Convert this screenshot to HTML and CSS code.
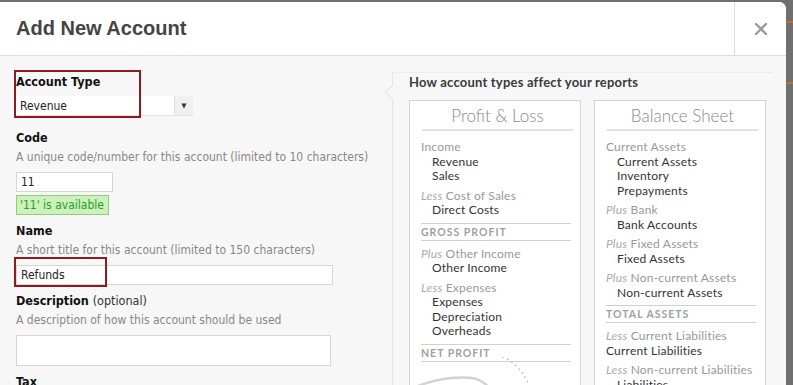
FILE: index.html
```html
<!DOCTYPE html>
<html lang="en">
<head>
  <meta charset="UTF-8" />
  <title>Add New Account</title>
  <link rel="stylesheet" href="styles.css">
</head>
<body>
  <div class="modal">
    <div class="modal-header">
      <h1>Add New Account</h1>
      <div class="close">
        <svg width="12" height="12" viewBox="0 0 12 12">
          <path d="M1 1 L11 11 M11 1 L1 11" stroke="#9a9a9a" stroke-width="2.4" stroke-linecap="round"/>
        </svg>
      </div>
    </div>

    <div class="modal-body">
      <div class="form">
        <div class="field first">
          <label>Account Type</label>
          <div class="select">
            <span>Revenue</span>
            <span class="select-btn">&#9660;</span>
          </div>
          <div class="mark mark-type"></div>
        </div>

        <div class="field">
          <label>Code</label>
          <div class="help">A unique code/number for this account (limited to 10 characters)</div>
          <div class="input code-input">11</div>
          <div class="available">'11' is available</div>
        </div>

        <div class="field">
          <label>Name</label>
          <div class="help">A short title for this account (limited to 150 characters)</div>
          <div class="input name-input">Refunds</div>
          <div class="mark mark-name"></div>
        </div>

        <div class="field">
          <label>Description <span class="optional">(optional)</span></label>
          <div class="help">A description of how this account should be used</div>
          <div class="input textarea"></div>
        </div>

        <div class="field">
          <label>Tax</label>
        </div>
      </div>

      <div class="guide">
        <div class="guide-title">How account types affect your reports</div>
        <div class="reports">
          <div class="report">
            <div class="report-title">Profit &amp; Loss</div>
            <div class="group">
              <div class="cat">Income</div>
              <div class="item">Revenue</div>
              <div class="item">Sales</div>
            </div>
            <div class="group">
              <div class="cat"><i>Less</i> Cost of Sales</div>
              <div class="item">Direct Costs</div>
            </div>
            <div class="total">Gross Profit</div>
            <div class="group">
              <div class="cat"><i>Plus</i> Other Income</div>
              <div class="item">Other Income</div>
            </div>
            <div class="group">
              <div class="cat"><i>Less</i> Expenses</div>
              <div class="item">Expenses</div>
              <div class="item">Depreciation</div>
              <div class="item">Overheads</div>
            </div>
            <div class="total">Net Profit</div>
            <svg class="lens" width="172" height="40" viewBox="0 0 172 40">
              <path d="M0 34 Q34 18 66 21 Q80 23 90 40" fill="#fff" stroke="#d2d2d2" stroke-width="2.5"/>
              <path d="M92 -2 Q116 5 128 40" fill="none" stroke="#b0b0b0" stroke-width="1.3" stroke-dasharray="1.5 3.5"/>
            </svg>
          </div>

          <div class="report">
            <div class="report-title">Balance Sheet</div>
            <div class="group">
              <div class="cat">Current Assets</div>
              <div class="item">Current Assets</div>
              <div class="item">Inventory</div>
              <div class="item">Prepayments</div>
            </div>
            <div class="group">
              <div class="cat"><i>Plus</i> Bank</div>
              <div class="item">Bank Accounts</div>
            </div>
            <div class="group">
              <div class="cat"><i>Plus</i> Fixed Assets</div>
              <div class="item">Fixed Assets</div>
            </div>
            <div class="group">
              <div class="cat"><i>Plus</i> Non-current Assets</div>
              <div class="item">Non-current Assets</div>
            </div>
            <div class="total">Total Assets</div>
            <div class="group">
              <div class="cat"><i>Less</i> Current Liabilities</div>
              <div class="item flat">Current Liabilities</div>
            </div>
            <div class="group">
              <div class="cat"><i>Less</i> Non-current Liabilities</div>
              <div class="item">Liabilities</div>
            </div>
          </div>
        </div>
      </div>
    </div>
  </div>
</body>
</html>
```

FILE: styles.css
```css
* {
  box-sizing: border-box;
}

body {
  margin: 0;
  width: 793px;
  height: 385px;
  overflow: hidden;
  background-color: #6f6f6f;
  background-image:
    linear-gradient(to bottom, transparent 21px, #b8742c 21px, #b8742c 23px, transparent 23px),
    linear-gradient(to bottom, transparent 82px, #b8742c 82px, #b8742c 84px, transparent 84px);
  font-family: 'DejaVu Sans Condensed', 'DejaVu Sans', sans-serif;
  font-stretch: condensed;
  color: #222;
}

.modal {
  margin-top: 2px;
  width: 786px;
  height: 383px;
  overflow: hidden;
  background: #f7f7f7;
  border-radius: 0 7px 0 0;
}

/* header */
.modal-header {
  display: flex;
  height: 54px;
  background: #fff;
  border-bottom: 1px solid #dcdcdc;
}

.modal-header h1 {
  flex: 1;
  margin: 0;
  padding-left: 16px;
  font-family: 'Liberation Sans', Arial, sans-serif;
  font-stretch: normal;
  font-size: 20px;
  line-height: 53px;
  color: #444;
}

.close {
  display: flex;
  align-items: center;
  justify-content: center;
  width: 52px;
  border-left: 1px solid #dcdcdc;
}

/* body */
.modal-body {
  display: flex;
  padding-left: 16px;
}

.form {
  width: 376px;
  padding-top: 18px;
}

.field {
  position: relative;
  margin-top: 8px;
}

.field.first {
  margin-top: 0;
  margin-bottom: 14px;
}

.field label {
  display: block;
  font-size: 12.5px;
  font-weight: bold;
  line-height: 16px;
  color: #111;
}

.optional {
  font-weight: normal;
  color: #333;
}

.help {
  margin-top: 3px;
  font-size: 12px;
  line-height: 16px;
  color: #888;
  white-space: nowrap;
}

.select {
  display: flex;
  justify-content: space-between;
  width: 177px;
  height: 20px;
  margin-top: 6px;
  background: #fff;
  font-size: 12px;
  line-height: 20px;
  padding-left: 4px;
  border-bottom: 1px solid #e2e2e2;
}

.select-btn {
  width: 19px;
  text-align: center;
  font-size: 7px;
  color: #333;
  background: #f0f0f0;
  border-left: 1px solid #e2e2e2;
}

.input {
  margin-top: 7px;
  height: 20px;
  background: #fff;
  border: 1px solid #d6d6d6;
  padding-left: 4px;
  font-size: 12px;
  line-height: 18px;
  color: #222;
}

.code-input {
  width: 97px;
}

.name-input {
  width: 317px;
}

.textarea {
  width: 315px;
  height: 31px;
}

.available {
  display: inline-block;
  margin-top: 3px;
  height: 20px;
  padding: 0 4px 0 3px;
  background: #cdf0bd;
  border: 1px solid #8fcf7a;
  font-size: 12px;
  line-height: 18px;
  color: #24a024;
}

/* red highlight boxes */
.mark {
  position: absolute;
  border: 2px solid #8e1b21;
}

.mark-type {
  left: -2px;
  top: -4px;
  width: 127px;
  height: 48px;
}

.mark-name {
  left: -2px;
  top: 34px;
  width: 93px;
  height: 30px;
}

/* account type guide */
.guide {
  position: relative;
  margin-top: 16px;
  width: 380px;
  padding: 1px 0 0 16px;
  border-left: 1px solid #e4e4e4;
  border-top: 1px solid #ececec;
  font-family: Lato, 'Open Sans', sans-serif;
  font-stretch: normal;
}

.guide::before {
  content: "";
  position: absolute;
  left: -6px;
  top: 14px;
  width: 10px;
  height: 10px;
  background: #f7f7f7;
  border-left: 1px solid #e4e4e4;
  border-bottom: 1px solid #e4e4e4;
  transform: rotate(45deg);
}

.guide-title {
  font-size: 13px;
  line-height: 16px;
  font-weight: bold;
  color: #3a3a3a;
  letter-spacing: 0.2px;
}

.reports {
  display: flex;
  gap: 13px;
  margin-top: 10px;
}

.report {
  position: relative;
  width: 172px;
  height: 300px;
  padding: 0 9px 0 11px;
  background: #fff;
  border: 1px solid #d4d4d4;
  font-size: 12px;
}

.report-title {
  padding: 5px 0 3px;
  margin: 0 -2px 0 1px;
  font-size: 17px;
  font-weight: 300;
  line-height: 20px;
  text-align: center;
  color: #8a8a8a;
  border-bottom: 2px solid #e2e2e2;
}

.group {
  margin-top: 5px;
}

.group:nth-child(2) {
  margin-top: 9px;
}

.cat,
.item {
  line-height: 14.5px;
  white-space: nowrap;
}

.cat {
  color: #999;
  letter-spacing: 0.2px;
}

.cat i {
  color: #aaa;
}

.item {
  padding-left: 11px;
  color: #333;
  letter-spacing: 0.2px;
}

.item.flat {
  padding-left: 0;
}

.total {
  margin-top: 5px;
  border-top: 1px solid #d0d0d0;
  border-bottom: 1px solid #d0d0d0;
  font-size: 10.5px;
  font-weight: bold;
  line-height: 16px;
  letter-spacing: 1px;
  text-transform: uppercase;
  color: #a0a0a0;
}

.total + .group {
  margin-top: 6px;
}

.lens {
  position: absolute;
  left: -4px;
  top: 256px;
}
```
